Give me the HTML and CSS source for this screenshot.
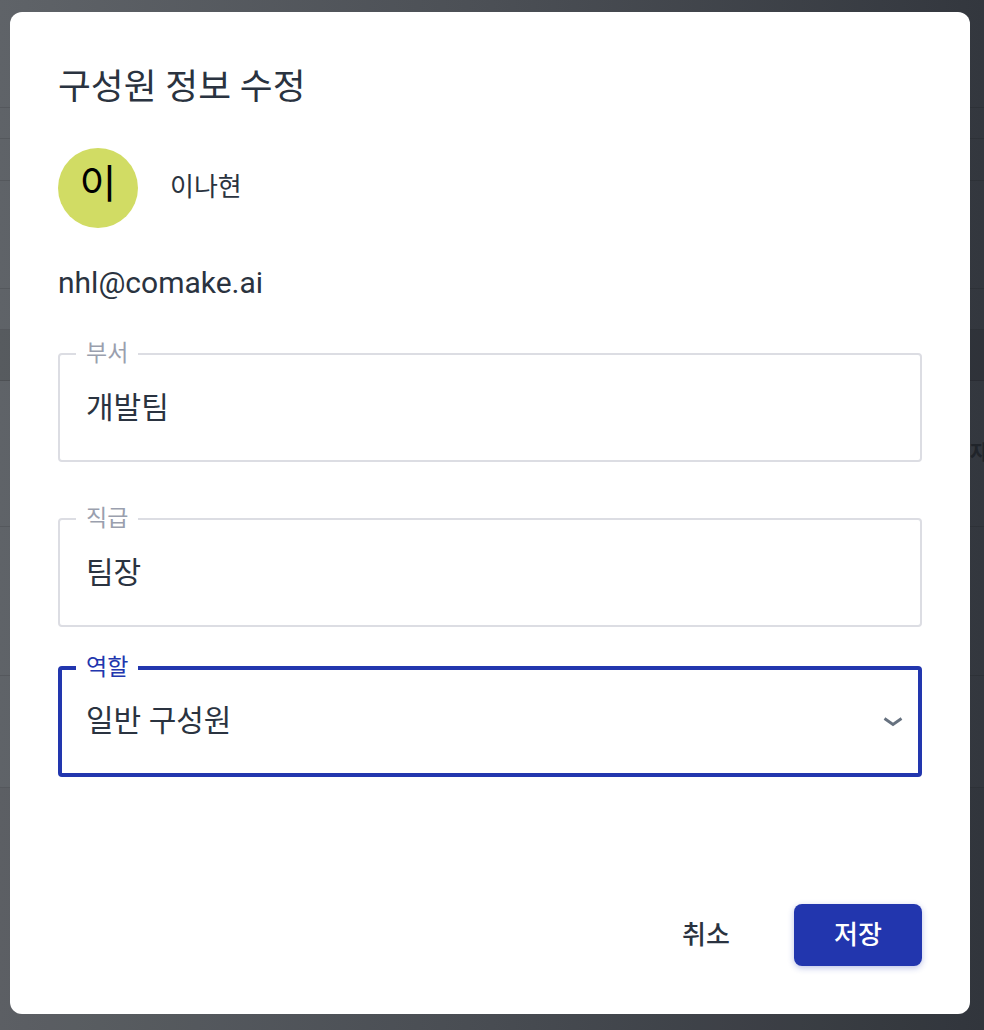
FILE: index.html
```html
<!DOCTYPE html>
<html lang="ko">
<head>
<meta charset="utf-8">
<title>구성원 정보 수정</title>
<link rel="stylesheet" href="styles.css">
</head>
<body>
<div class="backdrop">
  <div class="bg-row h107"></div>
  <div class="bg-row h31"></div>
  <div class="bg-row h42"></div>
  <div class="bg-row h108"></div>
  <div class="bg-row h41"></div>
  <div class="bg-row band h51"></div>
  <div class="bg-row h146 clip"><span class="bg-text">자</span></div>
  <div class="bg-row h149"></div>
  <div class="bg-row h112"></div>
  <div class="bg-row rest"></div>
</div>
<main class="dialog">
  <h1 class="title">구성원 정보 수정</h1>
  <div class="person">
    <div class="avatar"><span class="avatar-letter">이</span></div>
    <div class="name">이나현</div>
  </div>
  <div class="email">nhl@comake.ai</div>
  <fieldset class="field first">
    <legend>부서</legend>
    <div class="value">개발팀</div>
  </fieldset>
  <fieldset class="field second">
    <legend>직급</legend>
    <div class="value">팀장</div>
  </fieldset>
  <fieldset class="field active">
    <legend>역할</legend>
    <div class="value">일반 구성원</div>
    <svg class="chevron" width="20" height="10" viewBox="0 0 20 10" aria-hidden="true"><path d="M1.500 1.500 L10 7.500 L18.500 1.500" fill="none" stroke="#66717f" stroke-width="2.800"/></svg>
  </fieldset>
  <div class="actions">
    <button class="btn cancel">취소</button>
    <button class="btn save">저장</button>
  </div>
</main>
</body>
</html>
```
FILE: styles.css
```css
* { box-sizing: border-box; }
html, body { margin: 0; height: 100%; overflow: hidden; }
body {
  font-family: Roboto, "Noto Sans CJK KR", sans-serif;
  color: #2a3340;
  position: relative;
  width: 984px;
  height: 1030px;
}
.backdrop {
  height: 1030px;
  display: flex;
  flex-direction: column;
  background: linear-gradient(90deg, #5f6368 0%, #4b4f55 50%, #33373e 100%);
}
.bg-row { border-bottom: 1px solid rgba(0,0,0,.1); position: relative; }
.h107 { height: 108px; }
.h31 { height: 31px; }
.h42 { height: 42px; }
.h108 { height: 108px; }
.h41 { height: 41px; }
.h51 { height: 51px; background: rgba(0,0,0,.08); }
.h146 { height: 146px; }
.h149 { height: 149px; }
.h112 { height: 112px; }
.rest { flex: 1; border-bottom: 0; background: rgba(0,0,0,.03); }
.clip { overflow: hidden; }
.bg-text { position: absolute; left: 970px; top: 56px; font-size: 20px; font-weight: 700; color: #20242a; }
.dialog {
  position: absolute;
  left: 10px;
  top: 12px;
  width: 960px;
  height: 1002px;
  background: #fff;
  border-radius: 12px;
  padding: 0 48px;
  display: flex;
  flex-direction: column;
}
.title { margin: 54px 0 0; font-size: 35.700px; font-weight: 400; line-height: 42px; height: 42px; }
.person { display: flex; align-items: center; margin-top: 40px; }
.avatar {
  width: 80px; height: 80px; border-radius: 50%;
  background: #d1dc64; color: #000;
  font-size: 40px; line-height: 74px; text-align: center;
}
.avatar-letter { display: block; height: 80px; }
.name { margin-left: 32px; font-size: 26px; line-height: 30px; margin-top: -2px; }
.email { margin-top: 36px; font-size: 30px; line-height: 38px; }
.field {
  margin: 0; padding: 0 0 0 26px; min-width: 0; position: relative;
  border: 2px solid #dcdde3; border-radius: 4px; height: 122px;
}
.field.first { margin-top: 38px; }
.field.second { margin-top: 43px; }
.field.active { margin-top: 27px; border: 4px solid #2236ae; padding-left: 24px; height: 123px; }
.field legend { padding: 0 10px; margin-left: -10px; font-size: 23px; line-height: 28px; color: #9a9fae; }
.field.active legend { color: #2236ae; margin-left: -10px; }
.value { font-size: 30px; line-height: 40px; margin-top: 20px; }
.field.active .value { margin-top: 19px; }
.chevron { position: absolute; right: 15px; top: 35px; }
.actions { margin-top: auto; margin-bottom: 48px; display: flex; justify-content: flex-end; align-items: center; gap: 24px; }
.btn { font-family: inherit; font-size: 26px; font-weight: 500; border: 0; border-radius: 8px; height: 62px; width: 128px; padding: 0 0 6px; background: none; color: #2a3340; }
.save { background: #2236ae; color: #fff; box-shadow: 0 2px 6px rgba(34,54,174,.3); }
```
